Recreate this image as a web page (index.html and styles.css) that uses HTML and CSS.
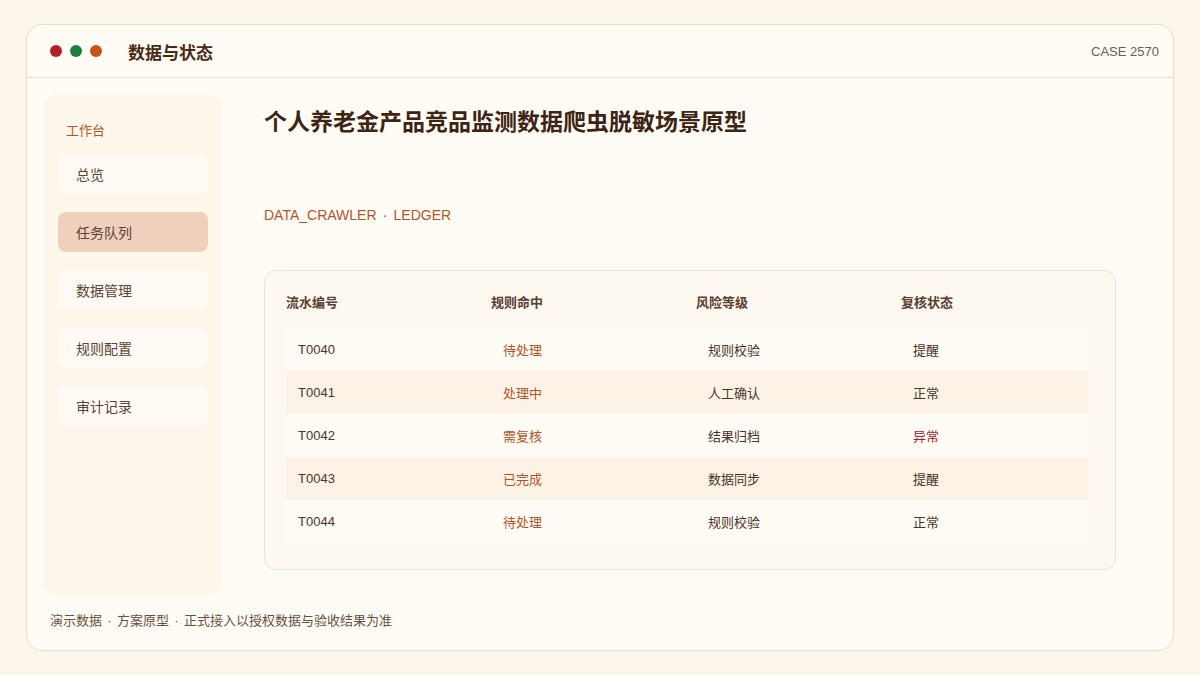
FILE: index.html
```html
<!DOCTYPE html>
<html lang="zh">
<head>
<meta charset="utf-8">
<link rel="stylesheet" href="styles.css">
</head>
<body>
<div class="window">
  <header class="topbar">
    <div class="dots"><span class="dot red"></span><span class="dot green"></span><span class="dot orange"></span></div>
    <div class="app-title">数据与状态</div>
    <div class="case">CASE 2570</div>
  </header>
  <div class="body">
    <aside class="sidebar">
      <div class="side-label">工作台</div>
      <nav class="nav">
        <div class="nav-item">总览</div>
        <div class="nav-item active">任务队列</div>
        <div class="nav-item">数据管理</div>
        <div class="nav-item">规则配置</div>
        <div class="nav-item">审计记录</div>
      </nav>
    </aside>
    <main class="main">
      <h1 class="title">个人养老金产品竞品监测数据爬虫脱敏场景原型</h1>
      <div class="subtitle">DATA_CRAWLER<span class="sep sep-lg">·</span>LEDGER</div>
      <section class="card">
        <div class="thead">
          <div>流水编号</div><div>规则命中</div><div>风险等级</div><div>复核状态</div>
        </div>
        <div class="row"><div>T0040</div><div class="accent">待处理</div><div>规则校验</div><div>提醒</div></div>
        <div class="row alt"><div>T0041</div><div class="accent">处理中</div><div>人工确认</div><div>正常</div></div>
        <div class="row"><div>T0042</div><div class="accent">需复核</div><div>结果归档</div><div class="danger">异常</div></div>
        <div class="row alt"><div>T0043</div><div class="accent">已完成</div><div>数据同步</div><div>提醒</div></div>
        <div class="row"><div>T0044</div><div class="accent">待处理</div><div>规则校验</div><div>正常</div></div>
      </section>
    </main>
  </div>
  <footer class="footer">演示数据<span class="sep">·</span>方案原型<span class="sep">·</span>正式接入以授权数据与验收结果为准</footer>
</div>
</body>
</html>
```
FILE: styles.css
```css
* { box-sizing: border-box; }
html, body { margin: 0; padding: 0; }
body {
  background: #fcf5ea;
  font-family: "Liberation Sans", "Noto Sans CJK SC", sans-serif;
  color: #4a3526;
  width: 1200px;
  height: 675px;
  padding: 24px 26px;
}
.window {
  width: 1148px;
  height: 627px;
  background: #fffcf6;
  border: 1px solid #e9dccb;
  border-radius: 16px;
  display: flex;
  flex-direction: column;
  overflow: hidden;
}
.topbar {
  height: 53px;
  flex: none;
  border-bottom: 1px solid #eadfcf;
  display: flex;
  align-items: center;
  padding: 0 14px 0 23px;
}
.dots { display: flex; gap: 8px; }
.dot { width: 12px; height: 12px; border-radius: 50%; display: block; }
.red { background: #b51f27; }
.green { background: #198041; }
.orange { background: #c9501b; }
.app-title {
  margin-left: 26px;
  font-size: 17px;
  font-weight: 700;
  color: #4a2a14;
}
.case {
  margin-left: auto;
  font-size: 13px;
  color: #6e5c4c;
}
.body {
  flex: 1;
  display: flex;
  gap: 43px;
  padding: 17px 0 0 17px;
}
.sidebar {
  width: 177px;
  height: 500px;
  background: #fdf6eb;
  border-radius: 10px;
  padding: 27px 13px 0 14px;
}
.side-label {
  font-size: 13px;
  line-height: 18px;
  color: #b5532a;
  padding-left: 8px;
}
.nav {
  margin-top: 14px;
  display: flex;
  flex-direction: column;
  gap: 18px;
}
.nav-item {
  height: 40px;
  border-radius: 8px;
  background: #fffbf4;
  font-size: 14px;
  color: #5a4434;
  display: flex;
  align-items: center;
  padding-left: 18px;
}
.nav-item.active { background: #f0cfbc; }
.main {
  display: flex;
  flex-direction: column;
}
.title {
  margin: 12px 0 0;
  font-size: 23px;
  line-height: 30px;
  font-weight: 700;
  color: #3d2414;
}
.subtitle {
  margin-top: 69px;
  font-size: 14px;
  line-height: 18px;
  color: #b5532a;
}
.sep {
  display: inline-block;
  width: 15px;
  text-align: center;
}
.sep-lg { width: 17px; }
.card {
  margin-top: 46px;
  width: 852px;
  height: 300px;
  background: #fdf8f0;
  border: 1px solid #ece3d4;
  border-radius: 12px;
  padding: 23px 0 0 21px;
}
.thead, .row {
  display: grid;
  grid-template-columns: 205px 205px 205px 187px;
  width: 802px;
}
.thead {
  font-size: 13px;
  line-height: 18px;
  font-weight: 700;
  color: #5a4030;
  margin-bottom: 16px;
}
.row {
  height: 43px;
  align-items: center;
  font-size: 13px;
  background: #fffbf5;
  color: #4a3526;
}
.row.alt { background: #fcf3e6; }
.row > div { padding-left: 12px; }
.accent { color: #b5532a; }
.danger { color: #a8242a; }
.footer {
  flex: none;
  height: 56px;
  padding: 17px 0 0 23px;
  font-size: 13px;
  line-height: 18px;
  color: #6b5040;
}
```
